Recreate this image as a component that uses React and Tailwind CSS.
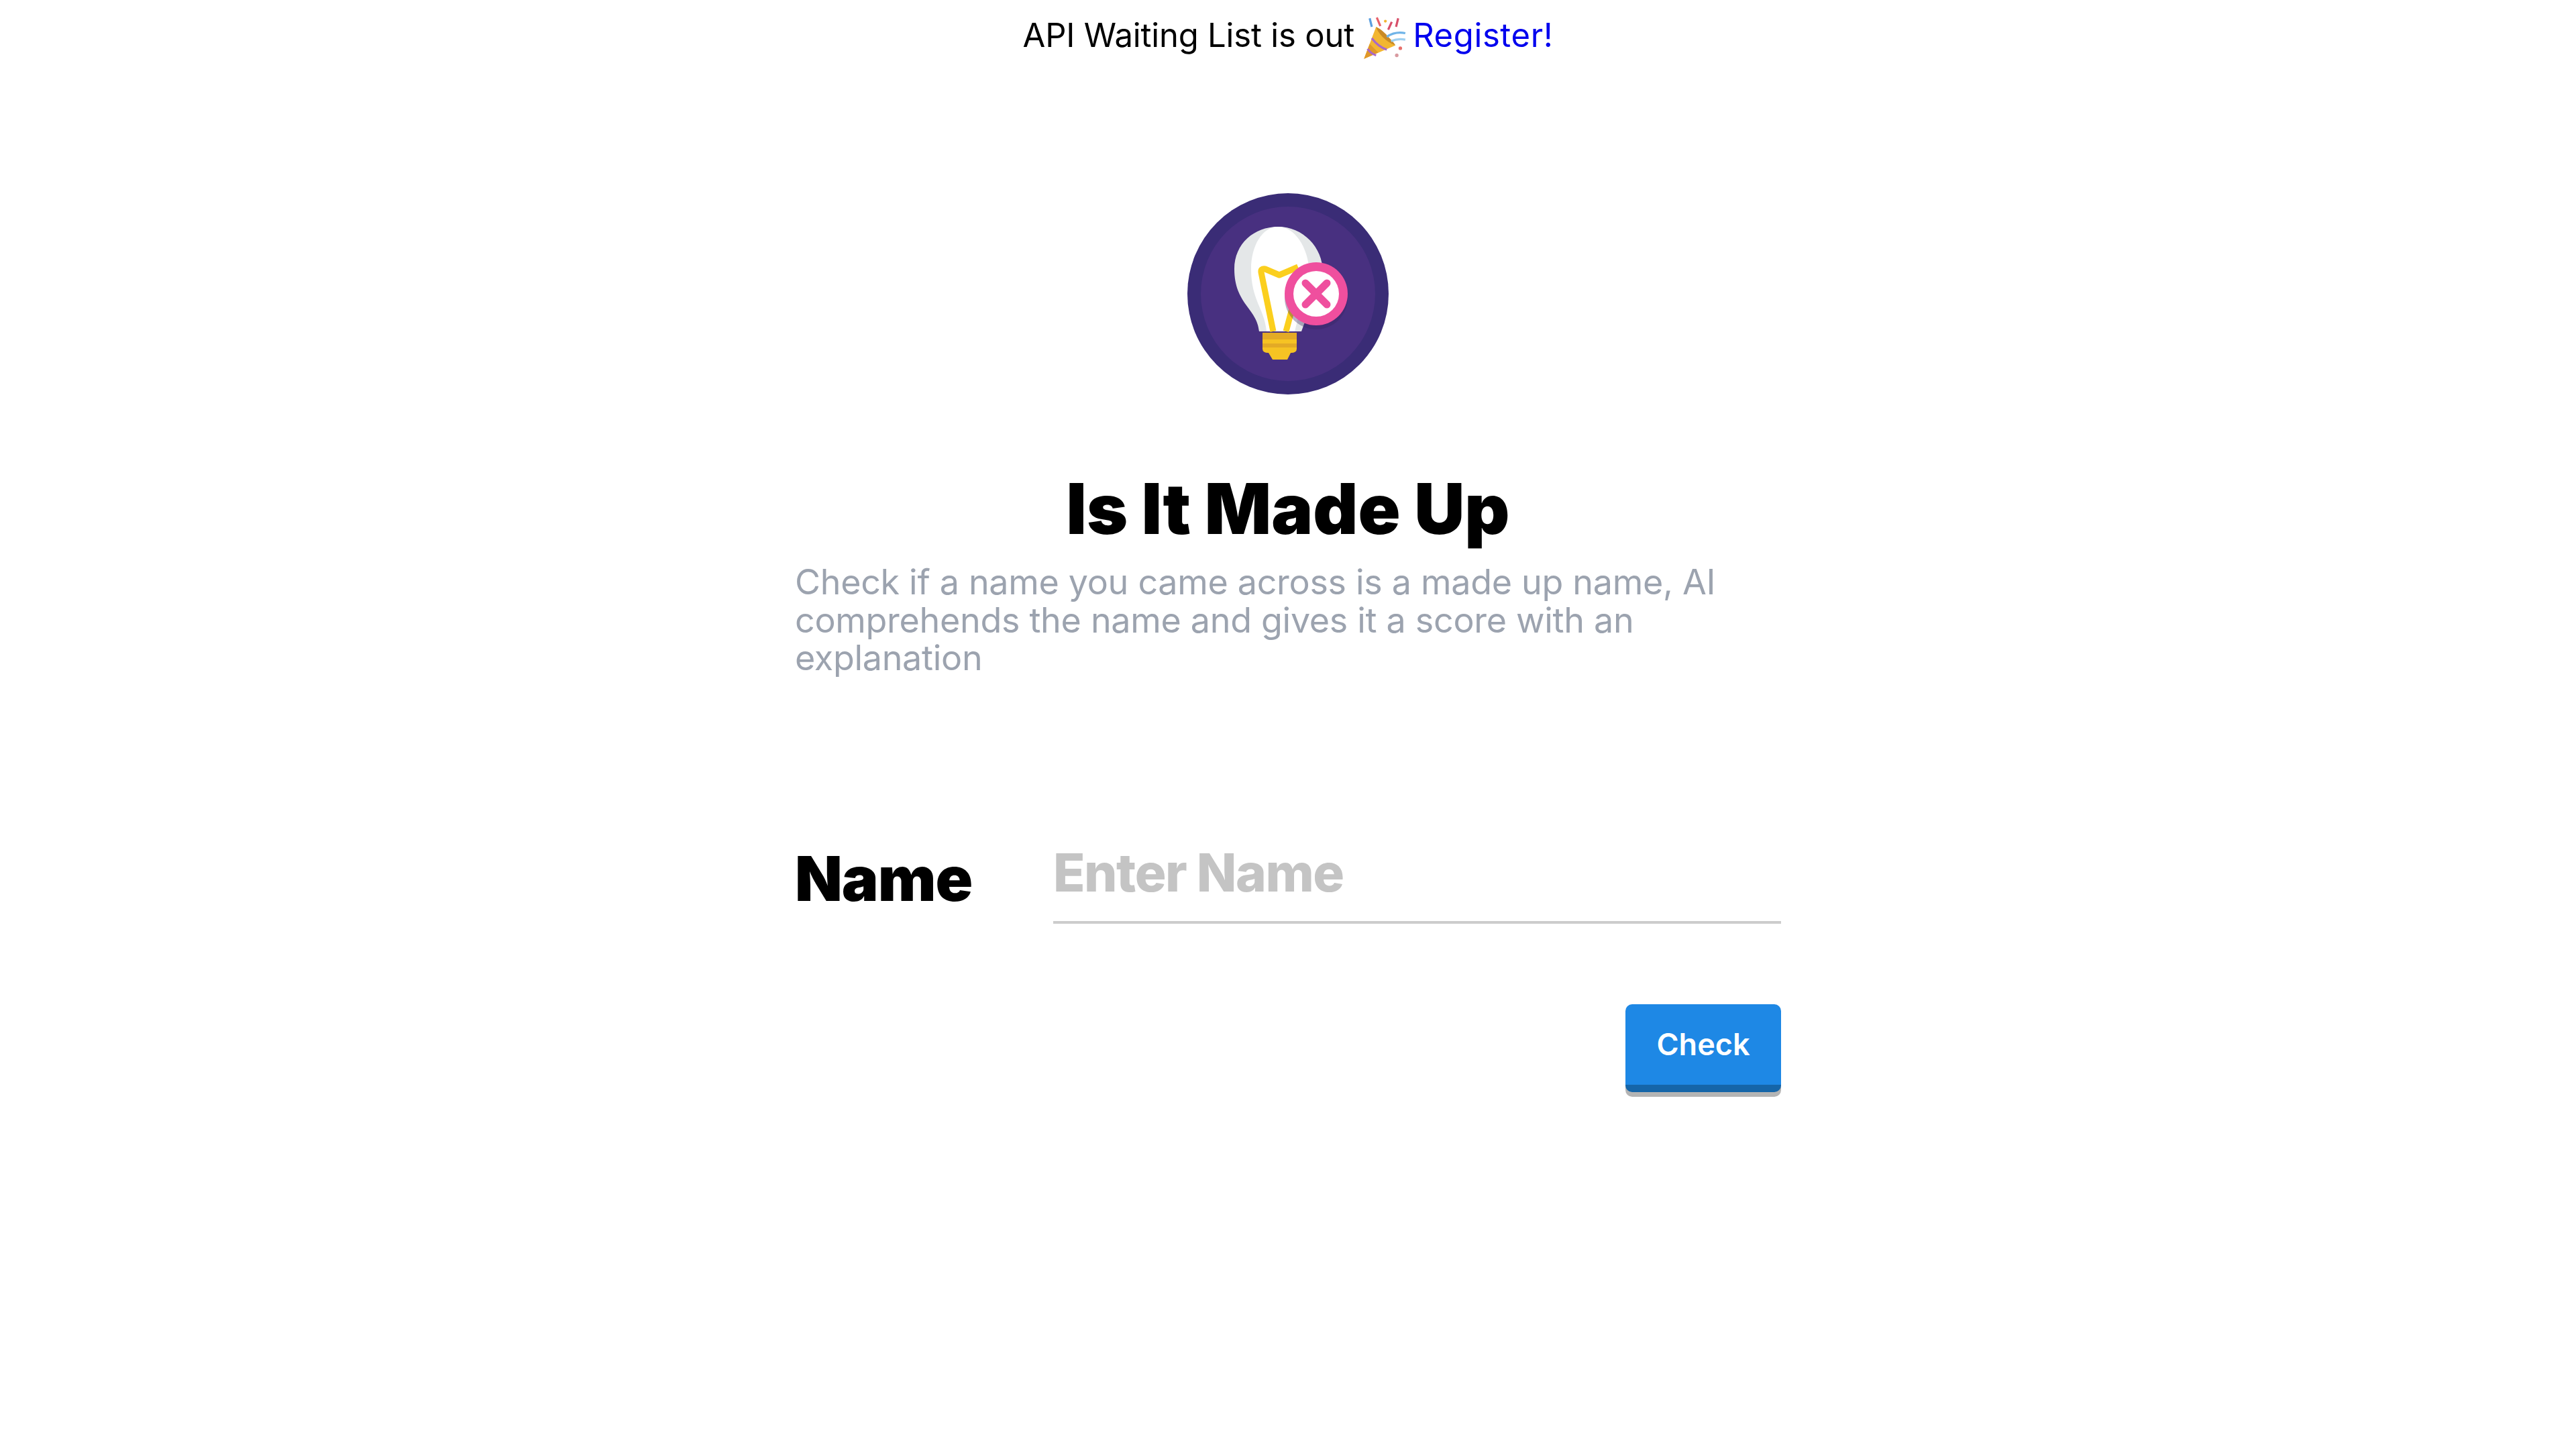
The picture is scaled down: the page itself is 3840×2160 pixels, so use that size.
const PopperIcon = () => (
  <svg viewBox="0 0 64 64" className="mx-[-4px] my-[-8px] inline-block h-[68px] w-[68px] align-[-13px]">
    <path d="M4 61 L21 16 L48 42 Z" fill="#f2b632" />
    <path d="M4 61 L12 40 L24 52 Z" fill="#e0982a" />
    <path d="M15 32 Q24 44 36 48" fill="none" stroke="#a868c8" strokeWidth="3" />
    <path d="M9 47 Q14 54 21 56" fill="none" stroke="#a868c8" strokeWidth="3" />
    <path d="M21 16 Q30 20 40 32 Q47 39 48 42 Q38 38 30 30 Q23 23 21 16Z" fill="#c98a24" />
    <path d="M36 30 Q48 22 62 25" fill="none" stroke="#6fb4e8" strokeWidth="3" />
    <path d="M42 36 Q52 32 62 34" fill="none" stroke="#9fd0f0" strokeWidth="3" />
    <path d="M27 15 L22 3" stroke="#e8606a" strokeWidth="3" fill="none" />
    <path d="M12 4 L15 16" stroke="#5b9fe0" strokeWidth="3" fill="none" />
    <path d="M38 20 L43 9 M52 4 L49 16" stroke="#d8506a" strokeWidth="3" fill="none" />
    <circle cx="55" cy="46" r="2.5" fill="#e8706a" />
    <circle cx="50" cy="56" r="2.5" fill="#d89aa0" />
    <circle cx="34" cy="8" r="2" fill="#f2b632" />
  </svg>
);

const BulbLogo = () => (
  <svg viewBox="0 0 300 300" className="h-[300px] w-[300px]">
    <circle cx="150" cy="150" r="150" fill="#3a2c76" />
    <circle cx="150" cy="150" r="130" fill="#483080" />
    <path
      d="M107 206 C104 172 70 165 70 113 C70 75 100 50 135 50 C172 50 202 80 202 118 L170 206 Z"
      fill="#e4e7e8"
    />
    <path
      d="M118 206 C115 172 95 160 95 113 C95 78 112 50 135 50 C160 50 180 80 182 118 L160 206 Z"
      fill="#ffffff"
    />
    <path
      d="M128 206 L110 118 Q109 112 116 113 L137 122 L165 110 M147 206 L158 165"
      fill="none"
      stroke="#fbcf1e"
      strokeWidth="9"
      strokeLinejoin="round"
    />
    <path d="M112 208 H163 V232 Q163 238 154 238 L149 248 H127 L121 238 Q112 238 112 232 Z" fill="#f6c323" />
    <rect x="112" y="208" width="51" height="10" fill="#e3aa26" />
    <rect x="112" y="224" width="51" height="6" fill="#e3aa26" />
    <circle cx="192" cy="156" r="47" fill="#33245f" opacity="0.35" />
    <circle cx="192" cy="150" r="47" fill="#ef4f9e" />
    <circle cx="192" cy="150" r="34" fill="#ffffff" />
    <path d="M176 134 L208 166 M208 134 L176 166" stroke="#ef4f9e" strokeWidth="11" strokeLinecap="round" />
  </svg>
);

export default function App() {
  return (
    <div className="flex min-h-screen flex-col items-center bg-white font-['Inter',sans-serif] text-black">
      <p className="mt-[21px] text-[49px] leading-[64px] tracking-[-0.2px]">
        API Waiting List is out <PopperIcon />{" "}
        <a href="#" className="tracking-[0.6px] text-[#0000ee]">
          Register!
        </a>
      </p>

      <div className="mt-[203px]">
        <BulbLogo />
      </div>

      <h1 className="mt-[110px] text-[104px] font-black leading-[120px] tracking-[0px]">Is It Made Up</h1>

      <div className="mt-[22px] w-[1470px]">
        <p className="text-[52px] leading-[56.5px] tracking-[-0.3px] text-[#9ca3af]">
          Check if a name you came across is a made up name, AI comprehends the name and gives it a score with an
          explanation
        </p>

        <div className="mt-[255px] flex items-start">
          <label className="mt-[-11px] w-[385px] shrink-0 text-[92px] font-black leading-[112px] tracking-[-1px]">
            Name
          </label>
          <input
            type="text"
            placeholder="Enter Name"
            className="h-[112px] w-full border-b-[4px] border-[#cccccc] bg-transparent pb-[36px] text-[78px] font-extrabold tracking-[-1.5px] outline-none placeholder:text-[#c4c4c4]"
          />
        </div>

        <div className="mt-[120px] flex justify-end">
          <button
            type="button"
            className="h-[131px] w-[232px] rounded-[10px] border-b-[11px] border-[#1565a8] bg-[#1e88e5] text-[45px] font-semibold text-white shadow-[0_7px_0_#b4b4b4]"
          >
            Check
          </button>
        </div>
      </div>
    </div>
  );
}
